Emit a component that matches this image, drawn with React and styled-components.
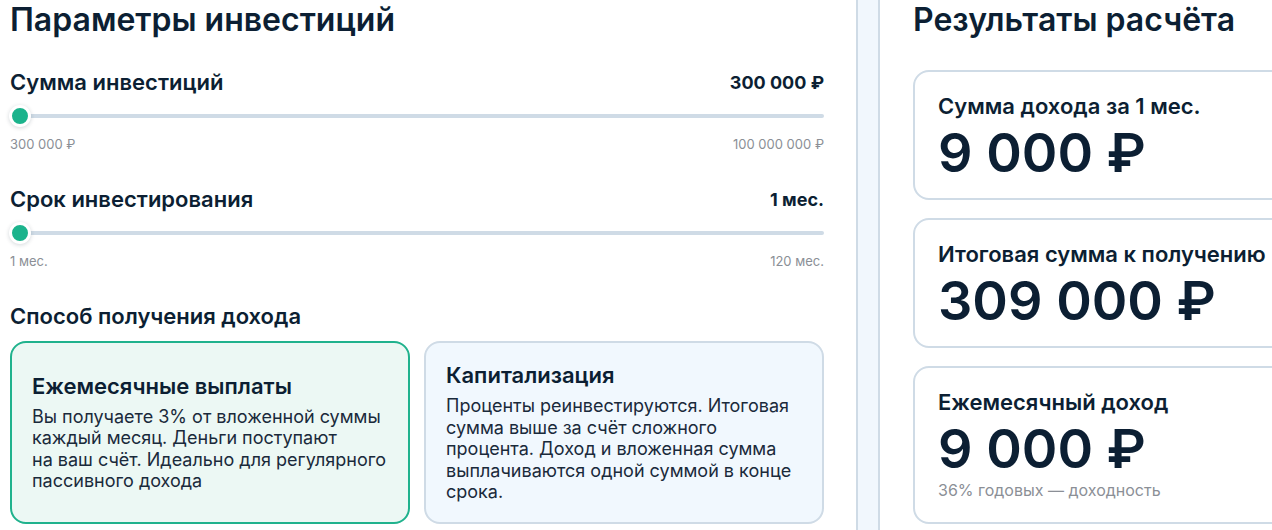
import React from "react";
import styled, { createGlobalStyle } from "styled-components";

const GlobalStyle = createGlobalStyle`
  html, body {
    margin: 0;
    padding: 0;
    background: #f1f7fd;
    overflow: hidden;
  }
  body {
    font-family: Inter, "Noto Sans", "DejaVu Sans", sans-serif;
    color: #0c1f33;
  }
  * { box-sizing: border-box; }
`;

const Page = styled.div`
  display: flex;
  gap: 20px;
  width: max-content;
  height: 530px;
`;

const LeftPanel = styled.section`
  width: 858px;
  height: 100%;
  background: #fff;
  border-right: 2px solid #cfdbe6;
  padding: 0 32px 0 10px;
  display: flex;
  flex-direction: column;
`;

const RightPanel = styled.section`
  width: 440px;
  height: 100%;
  background: #fff;
  border-left: 2px solid #cfdbe6;
  padding: 0 0 6px 33px;
  display: flex;
  flex-direction: column;
`;

const PanelTitle = styled.h1`
  margin: 0;
  font-size: 32px;
  line-height: 40px;
  font-weight: 600;
  color: #0c1f33;
`;

const SliderGroup = styled.div`
  margin-top: ${(p) => p.$top}px;
`;

const LabelRow = styled.div`
  display: flex;
  justify-content: space-between;
  align-items: center;
  height: 28px;
`;

const FieldLabel = styled.span`
  font-size: 22px;
  font-weight: 600;
  color: #0c1f33;
`;

const FieldValue = styled.span`
  font-size: 18px;
  font-weight: 700;
  color: #0c1f33;
`;

const TrackWrap = styled.div`
  position: relative;
  height: 22px;
  margin-top: 9px;
  display: flex;
  align-items: center;
`;

const Track = styled.div`
  width: 100%;
  height: 4px;
  border-radius: 2px;
  background: #cfdbe6;
`;

const Thumb = styled.div`
  position: absolute;
  top: 0;
  left: -1px;
  width: 22px;
  height: 22px;
  border-radius: 50%;
  background: #1bb38c;
  border: 3px solid #fff;
  box-shadow: 0 1px 4px rgba(12, 31, 51, 0.18);
`;

const RangeLabels = styled.div`
  display: flex;
  justify-content: space-between;
  margin-top: 9px;
  font-size: 13px;
  line-height: 16px;
  color: #8b8f96;
`;

const SectionTitle = styled.h3`
  margin: 33px 0 0;
  font-size: 22px;
  line-height: 28px;
  font-weight: 600;
  color: #0c1f33;
`;

const Options = styled.div`
  display: grid;
  grid-template-columns: 1fr 1fr;
  gap: 14px;
  margin-top: 11px;
`;

const OptionCard = styled.div`
  display: flex;
  flex-direction: column;
  justify-content: center;
  padding: 20px 20px 19px;
  border-radius: 16px;
  border: 2px solid ${(p) => (p.$active ? "#20b28d" : "#cfdbe6")};
  background: ${(p) => (p.$active ? "#ecf8f4" : "#f1f8fe")};
`;

const OptionTitle = styled.div`
  font-size: 22px;
  line-height: 24px;
  font-weight: 600;
  color: #0c1f33;
`;

const OptionText = styled.p`
  margin: 8px 0 0;
  font-size: 18px;
  line-height: 21.5px;
  color: #1a2a3b;
  white-space: nowrap;
`;

const Results = styled.div`
  flex: 1;
  display: flex;
  flex-direction: column;
  gap: 18px;
  margin-top: 30px;
`;

const ResultCard = styled.div`
  flex: ${(p) => (p.$grow ? 1 : "none")};
  padding: 21px 23px 12px;
  border: 2px solid #cfdbe6;
  border-radius: 16px;
  background: #fff;
`;

const ResultLabel = styled.div`
  font-size: 22px;
  line-height: 27px;
  font-weight: 600;
  color: #0c1f33;
  white-space: nowrap;
`;

const ResultValue = styled.div`
  font-size: 54px;
  line-height: 66px;
  font-weight: 600;
  color: #0c1f33;
  white-space: nowrap;
`;

const ResultNote = styled.div`
  margin-top: -2px;
  font-size: 16px;
  line-height: 20px;
  color: #8b8f96;
`;

const sliders = [
  { label: "Сумма инвестиций", value: "300 000 ₽", min: "300 000 ₽", max: "100 000 000 ₽", top: 28 },
  { label: "Срок инвестирования", value: "1 мес.", min: "1 мес.", max: "120 мес.", top: 33 },
];

const results = [
  { label: "Сумма дохода за 1 мес.", value: "9 000 ₽" },
  { label: "Итоговая сумма к получению", value: "309 000 ₽" },
  { label: "Ежемесячный доход", value: "9 000 ₽", note: "36% годовых — доходность" },
];

const App = () => {
  return (
    <>
      <GlobalStyle />
      <Page>
        <LeftPanel>
          <PanelTitle>Параметры инвестиций</PanelTitle>
          {sliders.map((s) => (
            <SliderGroup key={s.label} $top={s.top}>
              <LabelRow>
                <FieldLabel>{s.label}</FieldLabel>
                <FieldValue>{s.value}</FieldValue>
              </LabelRow>
              <TrackWrap>
                <Track />
                <Thumb />
              </TrackWrap>
              <RangeLabels>
                <span>{s.min}</span>
                <span>{s.max}</span>
              </RangeLabels>
            </SliderGroup>
          ))}

          <SectionTitle>Способ получения дохода</SectionTitle>
          <Options>
            <OptionCard $active>
              <OptionTitle>Ежемесячные выплаты</OptionTitle>
              <OptionText>
                Вы получаете 3% от вложенной суммы
                <br />
                каждый месяц. Деньги поступают
                <br />
                на ваш счёт. Идеально для регулярного
                <br />
                пассивного дохода
              </OptionText>
            </OptionCard>
            <OptionCard>
              <OptionTitle>Капитализация</OptionTitle>
              <OptionText>
                Проценты реинвестируются. Итоговая
                <br />
                сумма выше за счёт сложного
                <br />
                процента. Доход и вложенная сумма
                <br />
                выплачиваются одной суммой в конце
                <br />
                срока.
              </OptionText>
            </OptionCard>
          </Options>
        </LeftPanel>

        <RightPanel>
          <PanelTitle>Результаты расчёта</PanelTitle>
          <Results>
            {results.map((r, i) => (
              <ResultCard key={r.label} $grow={i === results.length - 1}>
                <ResultLabel>{r.label}</ResultLabel>
                <ResultValue>{r.value}</ResultValue>
                {r.note && <ResultNote>{r.note}</ResultNote>}
              </ResultCard>
            ))}
          </Results>
        </RightPanel>
      </Page>
    </>
  );
};

export default App;
